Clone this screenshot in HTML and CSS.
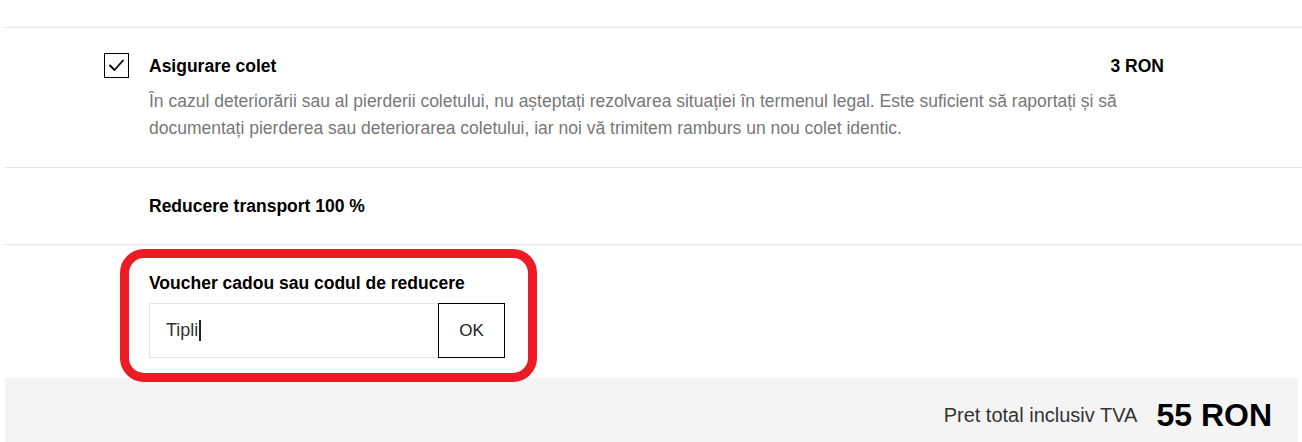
FILE: index.html
```html
<!DOCTYPE html>
<html lang="ro">
<head>
<meta charset="utf-8">
<title>Coș</title>
<link rel="stylesheet" href="styles.css">
</head>
<body>
<div class="summary">
  <div class="row row-insurance">
    <span class="checkbox">
      <svg width="23" height="23" viewBox="0 0 23 23"><polyline points="5,11.5 9.5,16 18,6.5" fill="none" stroke="#000" stroke-width="1.8" stroke-linecap="round" stroke-linejoin="round"/></svg>
    </span>
    <div class="insurance-body">
      <div class="insurance-head">
        <span class="title">Asigurare colet</span>
        <span class="price">3 RON</span>
      </div>
      <p class="desc">În cazul deteriorării sau al pierderii coletului, nu așteptați rezolvarea situației în termenul legal. Este suficient să raportați și să documentați pierderea sau deteriorarea coletului, iar noi vă trimitem ramburs un nou colet identic.</p>
    </div>
  </div>
  <div class="row row-discount">
    <span class="title">Reducere transport 100 %</span>
  </div>
  <div class="row-voucher">
    <div class="voucher-box">
      <div class="title">Voucher cadou sau codul de reducere</div>
      <div class="voucher-form">
        <div class="voucher-input">Tipli<span class="caret"></span></div>
        <button class="voucher-btn" type="button">OK</button>
      </div>
    </div>
  </div>
  <div class="total">
    <span class="total-label">Pret total inclusiv TVA</span>
    <span class="total-value">55 RON</span>
  </div>
</div>
</body>
</html>
```
FILE: styles.css
```css
* { box-sizing: border-box; }
html, body { margin: 0; padding: 0; background: #fff; }
body {
  font-family: "Liberation Sans", Arial, sans-serif;
  color: #000;
  height: 442px;
  overflow: hidden;
}
.summary {
  padding-top: 27px;
  padding-left: 5px;
}
.row {
  border-top: 1px solid #e3e3e3;
}
.row-insurance {
  display: flex;
  gap: 20px;
  padding: 25px 138px 25px 99px;
}
.checkbox {
  flex: 0 0 auto;
  width: 25px;
  height: 25px;
  border: 1px solid #000;
  display: flex;
  align-items: center;
  justify-content: center;
}
.insurance-body { flex: 1; }
.insurance-head {
  display: flex;
  justify-content: space-between;
  line-height: 26px;
}
.title {
  font-size: 17.5px;
  font-weight: bold;
  line-height: 26px;
}
.price {
  font-size: 17.5px;
  font-weight: bold;
}
.desc {
  margin: 9px 0 0;
  font-size: 17.5px;
  line-height: 27px;
  color: #777;
}
.row-discount {
  padding: 25px 0 25px 144px;
}
.row-voucher {
  border-top: 1px solid #e3e3e3;
  padding: 4px 0 0 115px;
  margin-bottom: -4px;
  position: relative;
  z-index: 1;
}
.voucher-box {
  display: inline-block;
  border: 9px solid #ed1c24;
  border-radius: 24px;
  padding: 12px 23px 15px 20px;
  background: #fff;
}
.voucher-form {
  display: flex;
  margin-top: 7px;
}
.voucher-input {
  width: 289px;
  height: 55px;
  border: 1px solid #e4e4e4;
  border-right: none;
  padding-left: 16px;
  display: flex;
  align-items: center;
  font-size: 18px;
  color: #333;
}
.caret {
  display: inline-block;
  width: 2px;
  height: 21px;
  background: #222;
  margin-left: 1px;
}
.voucher-btn {
  width: 67px;
  height: 55px;
  border: 1px solid #000;
  background: #fff;
  font-family: "Liberation Sans", Arial, sans-serif;
  font-size: 17px;
  color: #222;
  padding: 0;
}
.total {
  background: #f4f4f4;
  margin-right: 4px;
  height: 70px;
  display: flex;
  justify-content: flex-end;
  align-items: center;
  gap: 19px;
  padding: 4px 26px 0 0;
}
.total-label {
  font-size: 20px;
  color: #333;
}
.total-value {
  font-size: 32px;
  font-weight: bold;
}
```
